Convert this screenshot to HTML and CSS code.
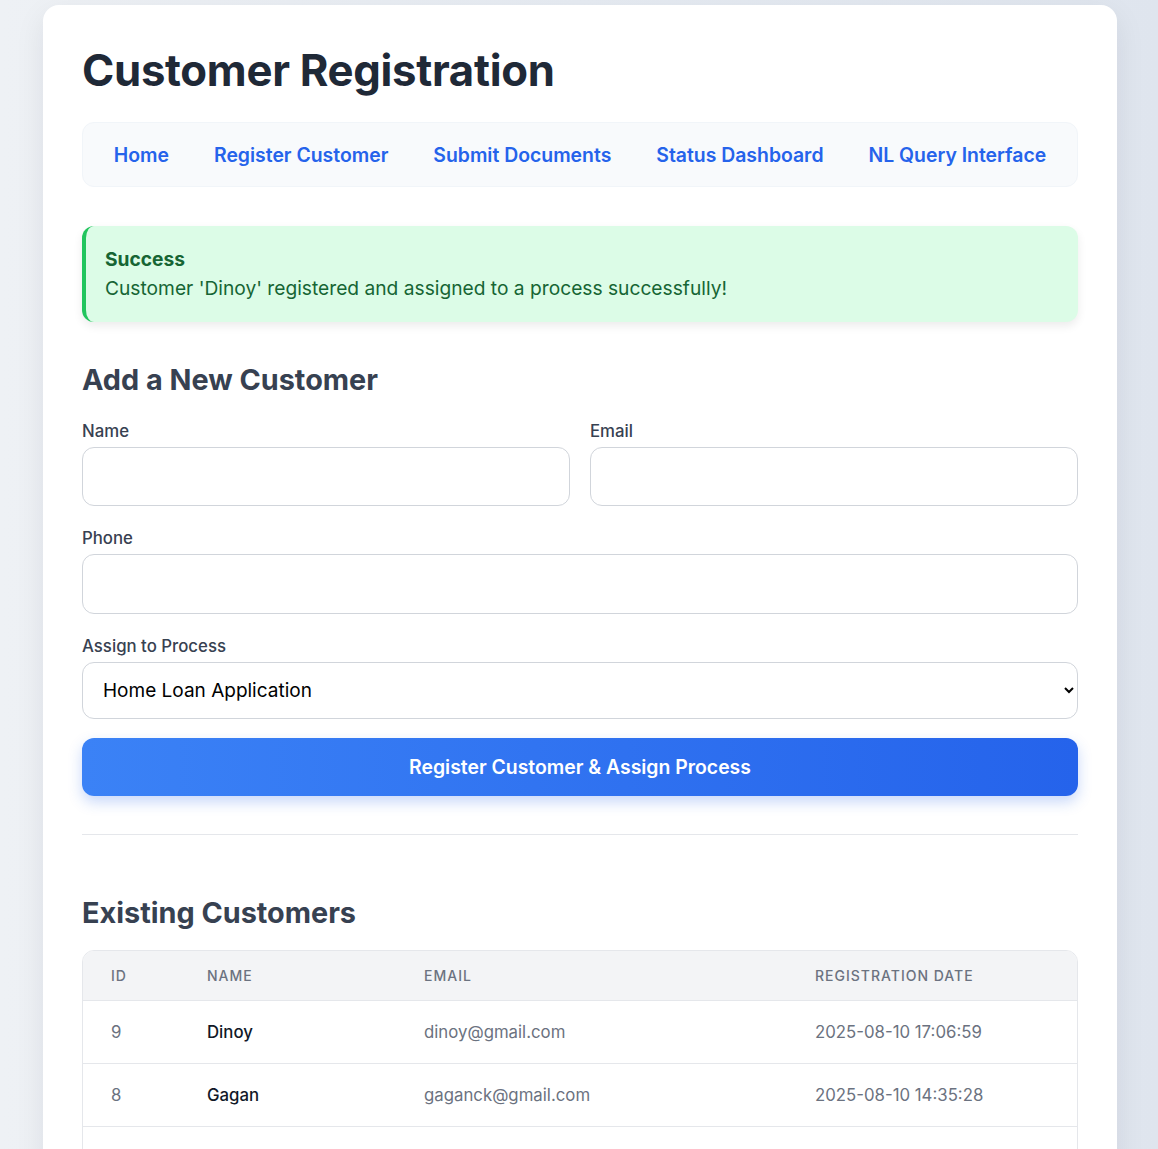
FILE: index.html
```html
<!DOCTYPE html>
<html lang="en">
<head>
<meta charset="utf-8">
<title>Customer Registration</title>
<link rel="stylesheet" href="styles.css">
</head>
<body>
<div class="card">
  <h1 class="title">Customer Registration</h1>
  <nav class="nav">
    <a href="#">Home</a>
    <a href="#">Register Customer</a>
    <a href="#">Submit Documents</a>
    <a href="#">Status Dashboard</a>
    <a href="#">NL Query Interface</a>
  </nav>

  <div class="alert">
    <div class="alert-title">Success</div>
    <div class="alert-msg">Customer 'Dinoy' registered and assigned to a process successfully!</div>
  </div>

  <h2 class="section-title">Add a New Customer</h2>
  <form class="form">
    <div class="row">
      <div class="field">
        <label>Name</label>
        <input type="text" class="input">
      </div>
      <div class="field">
        <label>Email</label>
        <input type="email" class="input">
      </div>
    </div>
    <div class="field">
      <label>Phone</label>
      <input type="text" class="input input-phone">
    </div>
    <div class="field">
      <label>Assign to Process</label>
      <select class="select">
        <option>Home Loan Application</option>
      </select>
    </div>
    <button type="button" class="btn">Register Customer &amp; Assign Process</button>
  </form>

  <hr class="divider">

  <h2 class="section-title existing">Existing Customers</h2>
  <div class="table-wrap">
    <table class="table">
      <colgroup>
        <col class="c-id"><col class="c-name"><col class="c-email"><col class="c-date">
      </colgroup>
      <thead>
        <tr><th>ID</th><th>Name</th><th>Email</th><th>Registration Date</th></tr>
      </thead>
      <tbody>
        <tr><td class="muted">9</td><td class="strong">Dinoy</td><td class="muted">dinoy@gmail.com</td><td class="muted">2025-08-10 17:06:59</td></tr>
        <tr><td class="muted">8</td><td class="strong">Gagan</td><td class="muted">gaganck@gmail.com</td><td class="muted">2025-08-10 14:35:28</td></tr>
        <tr><td></td><td></td><td></td><td></td></tr>
      </tbody>
    </table>
  </div>
</div>
</body>
</html>
```

FILE: styles.css
```css
* { box-sizing: border-box; }
html, body { margin: 0; padding: 0; }
body {
  font-family: Inter, "Noto Sans", sans-serif;
  background: linear-gradient(90deg, #eef1f5 0%, #e6ebf2 50%, #dfe5ee 100%);
  min-height: 1149px;
  padding-top: 5px;
}
.card {
  width: 1074px;
  margin: 0 0 0 43px;
  background: #fff;
  border-radius: 16px;
  padding: 40px 39px 40px;
  box-shadow: 0 10px 30px rgba(15, 23, 42, 0.08);
  min-height: 1200px;
}
.title {
  margin: 0;
  font-size: 43.7px;
  line-height: 52px;
  font-weight: 700;
  color: #1f2937;
  letter-spacing: -0.3px;
}
.nav {
  margin-top: 25px;
  background: #f8fafc;
  border: 1px solid #f1f5f9;
  border-radius: 12px;
  height: 65px;
  display: flex;
  align-items: center;
  justify-content: center;
  gap: 45px;
}
.nav a {
  color: #2563eb;
  text-decoration: none;
  font-size: 19.4px;
  font-weight: 600;
}
.alert {
  margin-top: 39px;
  background: #dcfce7;
  border-left: 4px solid #22c55e;
  border-radius: 12px;
  padding: 19px 19px 19px;
  box-shadow: 0 4px 10px rgba(0, 0, 0, 0.08);
  color: #166534;
  font-size: 19.2px;
}
.alert-title { font-weight: 700; line-height: 28px; }
.alert-msg { line-height: 30px; }
.section-title {
  margin: 40px 0 0;
  font-size: 28.8px;
  line-height: 36px;
  font-weight: 700;
  color: #374151;
}
.form { margin-top: 23px; display: flex; flex-direction: column; }
.row { display: flex; gap: 20px; }
.row .field { flex: 1; }
.field { display: flex; flex-direction: column; margin-bottom: 22px; }
.field label {
  font-size: 16.8px;
  font-weight: 500;
  color: #374151;
  line-height: 20px;
  margin-bottom: 6px;
}
.input {
  height: 59px;
  border: 1px solid #d1d5db;
  border-radius: 12px;
  padding: 0 19px;
  font: inherit;
  font-size: 19px;
}
.input-phone { height: 60px; }
.select {
  height: 57px;
  border: 1px solid #d1d5db;
  border-radius: 12px;
  padding: 0 18px 0 16px;
  font-family: Inter, sans-serif;
  font-size: 19px;
  color: #000;
  background: #fff;
}
.btn {
  height: 58px;
  border: none;
  border-radius: 12px;
  background: linear-gradient(90deg, #3b82f6 0%, #2563eb 100%);
  color: #fff;
  font-family: Inter, sans-serif;
  font-size: 19.4px;
  font-weight: 600;
  box-shadow: 0 6px 14px rgba(37, 99, 235, 0.25);
  margin-top: -3px;
}
.divider {
  margin: 38px 0 0;
  border: none;
  border-top: 1px solid #e5e7eb;
}
.existing { margin-top: 60px; }
.table-wrap {
  margin-top: 19px;
  border: 1px solid #e5e7eb;
  border-radius: 12px;
  overflow: hidden;
}
.table { width: 100%; border-collapse: collapse; }
.c-id { width: 96px; }
.c-name { width: 217px; }
.c-email { width: 391px; }
.table th {
  background: #f3f4f6;
  text-align: left;
  font-size: 14px;
  font-weight: 500;
  color: #6b7280;
  text-transform: uppercase;
  letter-spacing: 1px;
  height: 49px;
  padding: 0 28px;
  border-bottom: 1px solid #e5e7eb;
}
.table td {
  height: 63px;
  padding: 0 28px;
  font-size: 16.8px;
  border-bottom: 1px solid #e5e7eb;
}
.muted { color: #6b7280; }
.strong { color: #111827; font-weight: 500; }
```
